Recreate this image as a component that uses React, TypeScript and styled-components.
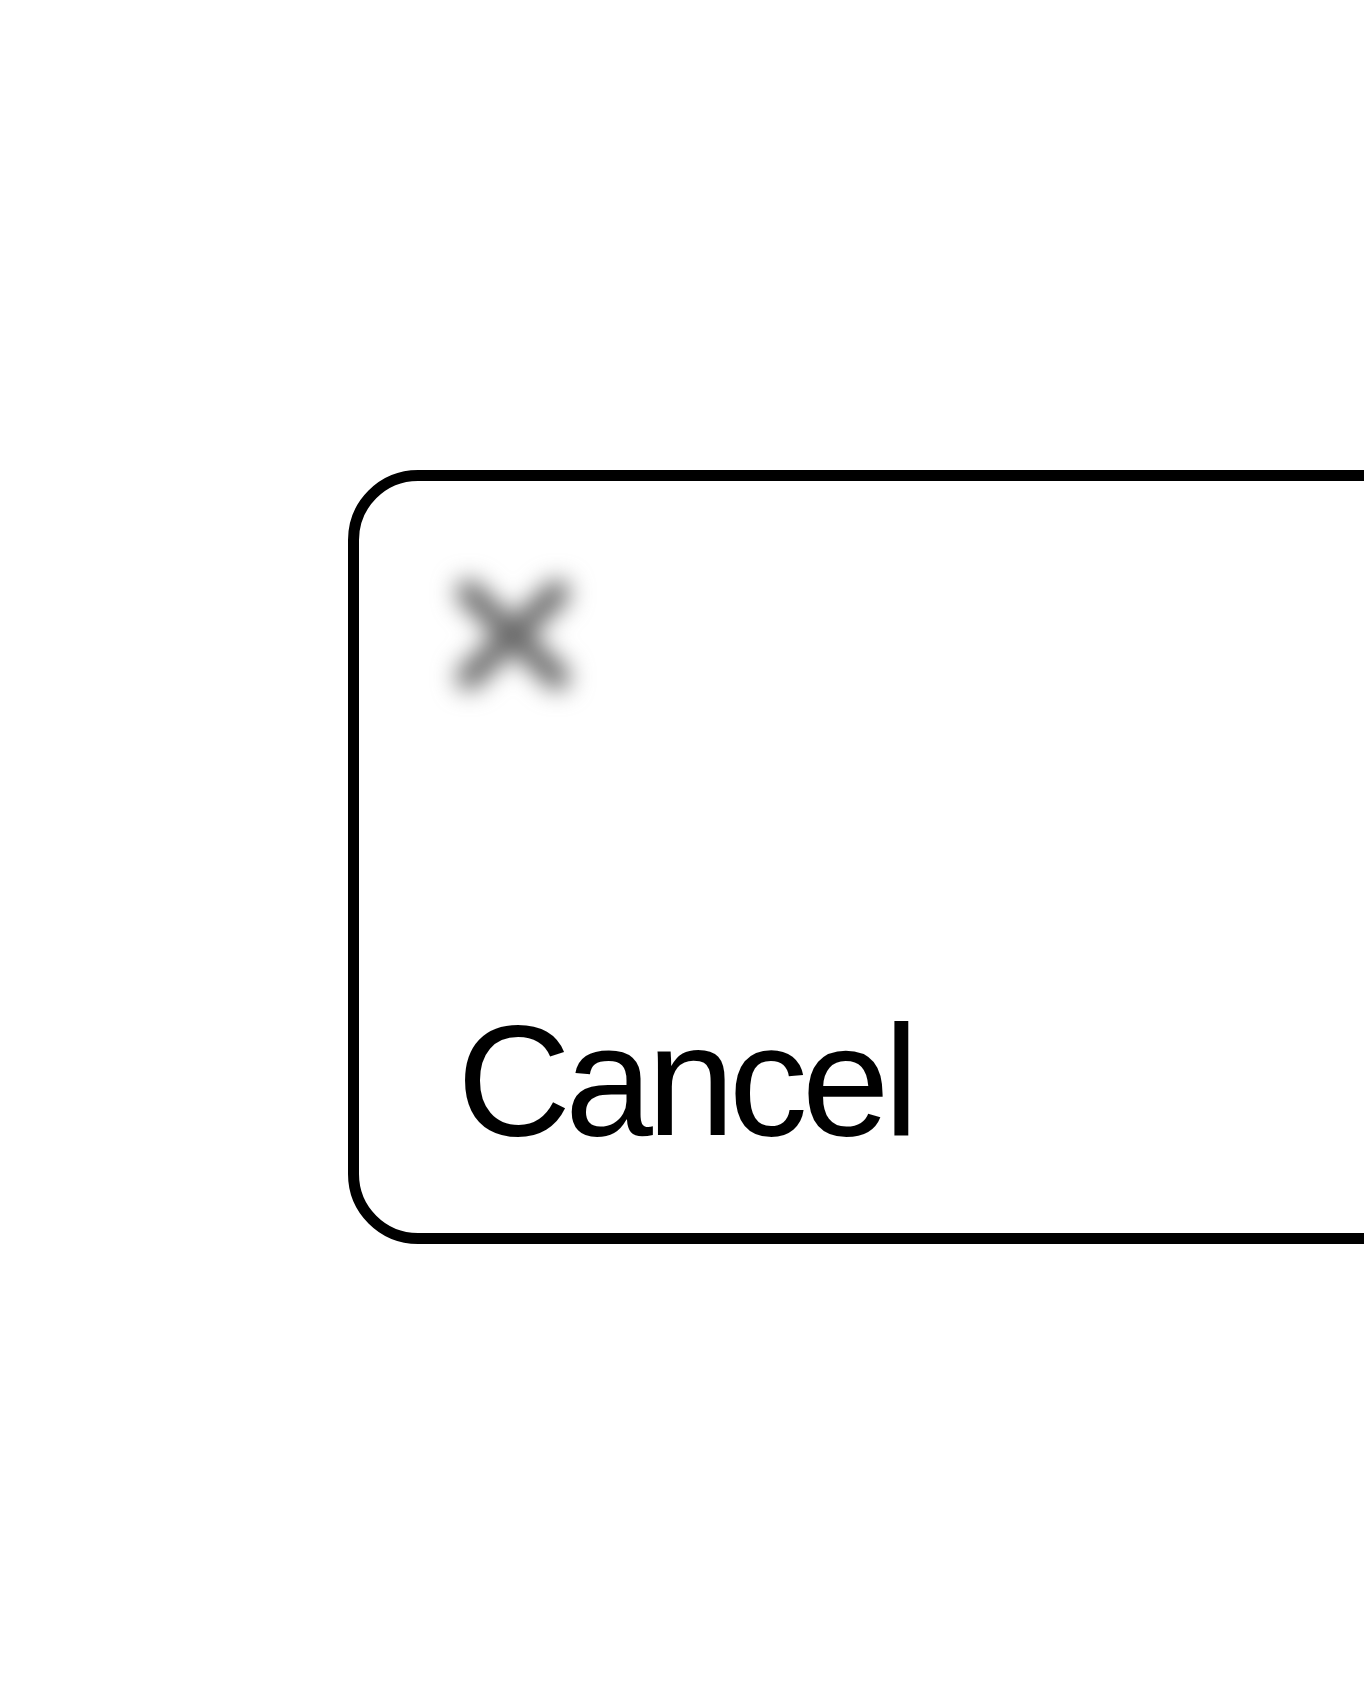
import React from "react";
import styled, { createGlobalStyle } from "styled-components";

const Global = createGlobalStyle`
  html, body { margin: 0; padding: 0; background: #fff; }
  body { overflow: hidden; font-family: "Liberation Sans", Arial, sans-serif; }
`;

const Stage = styled.div`
  width: 1364px;
  height: 1706px;
  overflow: hidden;
  padding: 470px 0 0 348px;
  box-sizing: border-box;
`;

const CancelButton = styled.button`
  display: flex;
  flex-direction: column;
  justify-content: space-between;
  align-items: flex-start;
  box-sizing: border-box;
  width: 1200px;
  height: 774px;
  flex-shrink: 0;
  border: 11px solid #000;
  border-radius: 70px;
  background: #fff;
  padding: 74px 0 74px 74px;
  margin: 0;
  cursor: pointer;
  font-family: "Liberation Sans", Arial, sans-serif;
`;

const IconWrap = styled.span`
  display: block;
  width: 160px;
  height: 160px;
  filter: blur(12px);
`;

const Label = styled.span`
  display: block;
  margin-left: 24px;
  font-size: 158px;
  line-height: 1;
  letter-spacing: -6px;
  color: #000;
`;

export default function App() {
  return (
    <>
      <Global />
      <Stage>
        <CancelButton type="button">
          <IconWrap>
            <svg width="160" height="160" viewBox="0 0 160 160">
              <path d="M36 38 L124 122 M124 38 L36 122" stroke="#6a6a6a" strokeWidth="26" strokeLinecap="round" fill="none" />
            </svg>
          </IconWrap>
          <Label>Cancel</Label>
        </CancelButton>
      </Stage>
    </>
  );
}
